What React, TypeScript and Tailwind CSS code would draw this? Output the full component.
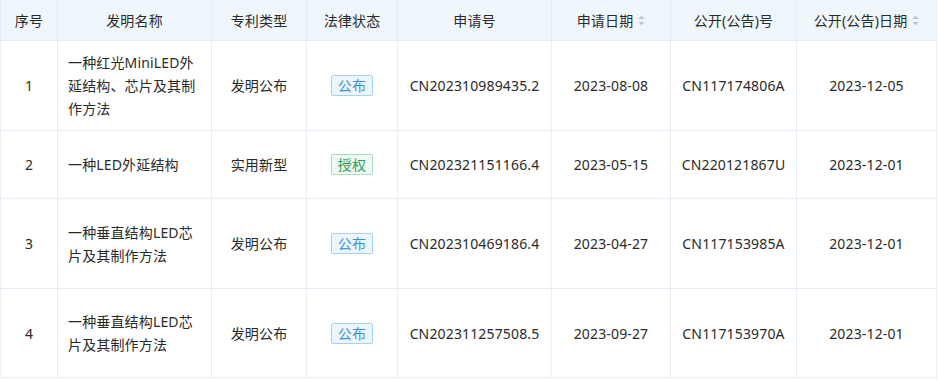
const rows = [
  {
    no: "1",
    name: ["一种红光MiniLED外", "延结构、芯片及其制", "作方法"],
    type: "发明公布",
    status: "公布",
    appNo: "CN202310989435.2",
    appDate: "2023-08-08",
    pubNo: "CN117174806A",
    pubDate: "2023-12-05",
    h: "h-[90px]",
  },
  {
    no: "2",
    name: ["一种LED外延结构"],
    type: "实用新型",
    status: "授权",
    appNo: "CN202321151166.4",
    appDate: "2023-05-15",
    pubNo: "CN220121867U",
    pubDate: "2023-12-01",
    h: "h-[68px]",
  },
  {
    no: "3",
    name: ["一种垂直结构LED芯", "片及其制作方法"],
    type: "发明公布",
    status: "公布",
    appNo: "CN202310469186.4",
    appDate: "2023-04-27",
    pubNo: "CN117153985A",
    pubDate: "2023-12-01",
    h: "h-[90px]",
  },
  {
    no: "4",
    name: ["一种垂直结构LED芯", "片及其制作方法"],
    type: "发明公布",
    status: "公布",
    appNo: "CN202311257508.5",
    appDate: "2023-09-27",
    pubNo: "CN117153970A",
    pubDate: "2023-12-01",
    h: "h-[89px]",
  },
]

const cols = "grid grid-cols-[57px_154px_95px_91px_154px_119px_126px_140px]"
const cell = "flex items-center justify-center border-r border-b border-[#e6ecf3]"

function SortIcon() {
  return (
    <svg width="7" height="11" viewBox="0 0 7 11" className="ml-[5px]">
      <path d="M3.5 0.5 L6.5 4 L0.5 4 Z" fill="#c0c4cc" />
      <path d="M3.5 10.5 L6.5 7 L0.5 7 Z" fill="#c0c4cc" />
    </svg>
  )
}

function Tag({ label }: { label: string }) {
  const granted = label === "授权"
  return (
    <span
      className={
        granted
          ? "inline-block px-[6px] leading-[19px] text-[14px] rounded-[2px] border border-[#a9dcc0] bg-[#effaf3] text-[#2f9b5c]"
          : "inline-block px-[6px] leading-[19px] text-[14px] rounded-[2px] border border-[#a9d0f2] bg-[#eef6fd] text-[#3a8ee6]"
      }
    >
      {label}
    </span>
  )
}

export default function App() {
  return (
    <div
      className="w-[938px] h-[380px] bg-white text-[14px] text-[#2a2a2a] leading-[23px] tracking-[0.15px]"
      style={{ fontFamily: '"Noto Sans", "Noto Sans CJK SC", sans-serif' }}
    >
      <div className="w-[937px] border-l border-[#e6ecf3]">
        <div className={`${cols} h-[41px] bg-[#f0f7fc]`}>
          <div className={cell}>序号</div>
          <div className={cell}>发明名称</div>
          <div className={cell}>专利类型</div>
          <div className={cell}>法律状态</div>
          <div className={cell}>申请号</div>
          <div className={cell}>
            申请日期
            <SortIcon />
          </div>
          <div className={cell}>公开(公告)号</div>
          <div className={cell}>
            公开(公告)日期
            <SortIcon />
          </div>
        </div>
        {rows.map((r) => (
          <div key={r.no} className={`${cols} ${r.h}`}>
            <div className={cell}>{r.no}</div>
            <div className={`${cell} !justify-start pl-[10px]`}>
              <div>
                {r.name.map((line, i) => (
                  <div key={i} className="whitespace-nowrap">
                    {line}
                  </div>
                ))}
              </div>
            </div>
            <div className={cell}>{r.type}</div>
            <div className={cell}>
              <Tag label={r.status} />
            </div>
            <div className={cell}>{r.appNo}</div>
            <div className={cell}>{r.appDate}</div>
            <div className={cell}>{r.pubNo}</div>
            <div className={cell}>{r.pubDate}</div>
          </div>
        ))}
      </div>
    </div>
  )
}
